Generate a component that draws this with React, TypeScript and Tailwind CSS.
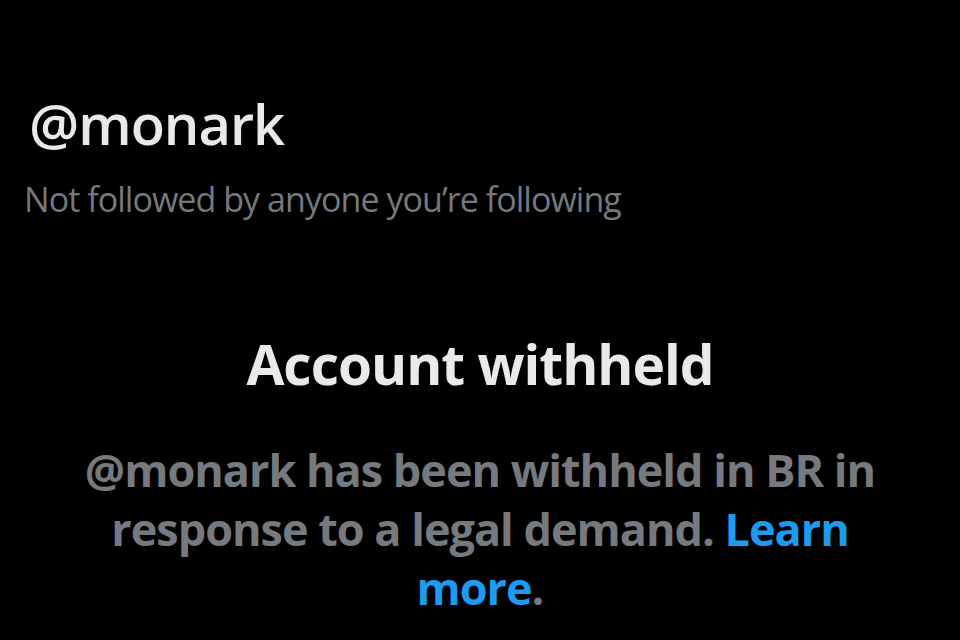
export default function App() {
  return (
    <div className="w-[960px] h-[640px] overflow-hidden bg-black font-['Open_Sans',sans-serif] antialiased">
      {/* Profile header */}
      <div className="pt-[91px] pl-[29px]">
        <h1 className="text-[56px] leading-[64px] font-semibold text-[#e7e9ea] tracking-[-1px]">@monark</h1>
        <p className="mt-[24px] -ml-[5px] text-[34px] leading-[40px] text-[#75797e] tracking-[-0.95px]">
          Not followed by anyone you’re following
        </p>
      </div>

      {/* Withheld notice */}
      <div className="mt-[113px] flex flex-col items-center text-center">
        <h2 className="text-[55px] leading-[64px] font-bold text-[#e7e9ea] tracking-[-1px]">Account withheld</h2>
        <p className="mt-[44px] w-[820px] text-[45px] leading-[59px] font-bold text-[#76797e] tracking-[-1px]">
          @monark has been withheld in BR in response to a legal demand.{' '}
          <a href="#" className="text-[#1d9bf0]">Learn more</a>.
        </p>
      </div>
    </div>
  )
}
